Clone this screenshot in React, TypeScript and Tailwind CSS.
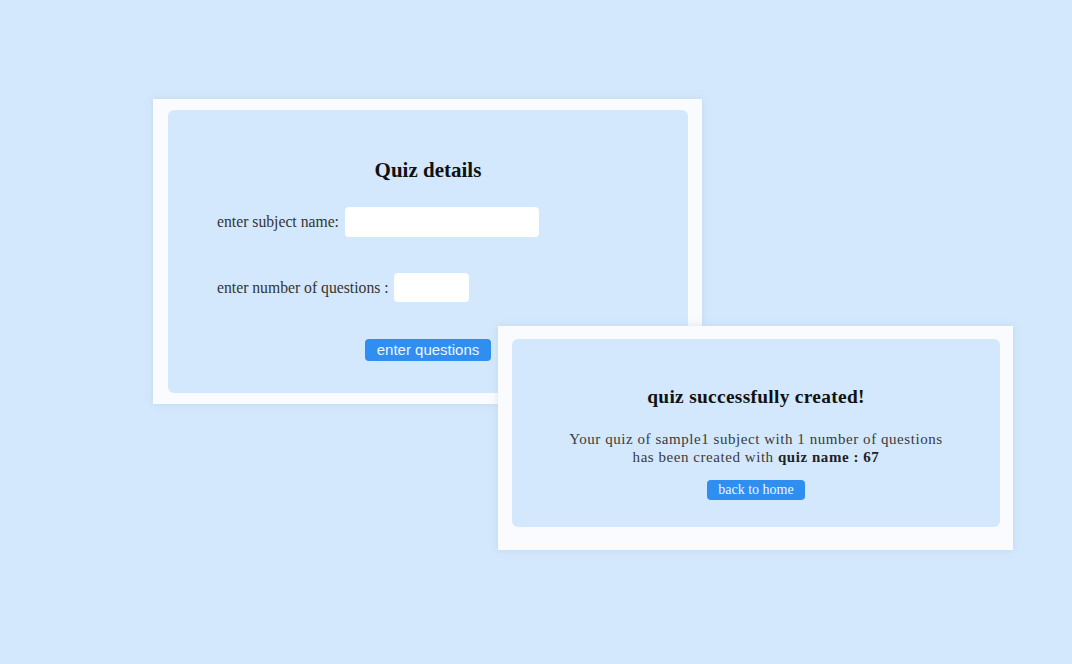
export default function App() {
  return (
    <div className="relative h-[664px] w-[1072px] overflow-hidden bg-[#d3e8fc] font-['Liberation_Serif',serif]">
      {/* quiz details card */}
      <div className="absolute left-[153px] top-[99px] h-[305px] w-[549px] bg-[#f9fbfe] pb-[11px] pl-[15px] pr-[14px] pt-[11px] shadow-[0_0_6px_rgba(180,200,225,0.5)]">
        <div className="flex h-full flex-col rounded-md bg-[#d3e8fc] pt-[48px]">
          <h2 className="text-center text-[21px] font-bold leading-[24px] text-[#111]">
            Quiz details
          </h2>
          <div className="mt-[25px] flex items-center pl-[49px] text-[15.7px] text-[#333]">
            <span>enter subject name:</span>
            <div className="ml-[6px] h-[30px] w-[194px] rounded-sm bg-white"></div>
          </div>
          <div className="mt-[36px] flex items-center pl-[49px] text-[15.7px] text-[#333]">
            <span>enter number of questions :</span>
            <div className="ml-[5px] h-[29px] w-[75px] rounded-sm bg-white"></div>
          </div>
          <div className="mt-[37px] flex justify-center">
            <button className="h-[22px] w-[126px] rounded-sm bg-[#2f8ff0] font-['Liberation_Sans',sans-serif] text-[15px] leading-[22px] text-[#eef5ff]">
              enter questions
            </button>
          </div>
        </div>
      </div>

      {/* success card */}
      <div className="absolute left-[498px] top-[326px] h-[224px] w-[515px] bg-[#f9fbfe] pb-[23px] pl-[14px] pr-[13px] pt-[13px] shadow-[0_0_6px_rgba(180,200,225,0.5)]">
        <div className="flex h-full flex-col items-center rounded-md bg-[#d3e8fc] pt-[47px]">
          <h2 className="text-center text-[19.4px] font-bold leading-[22px] tracking-[0.3px] text-[#111]">
            quiz successfully created!
          </h2>
          <p className="mt-[22px] text-center text-[15px] leading-[18px] tracking-[0.55px] text-[#3a3a3a]">
            Your quiz of sample1 subject with 1 number of questions
            <br />
            has been created with <b className="text-[#222]">quiz name : 67</b>
          </p>
          <button className="mt-[14px] h-[20px] w-[98px] rounded-sm bg-[#2f8ff0] text-[14px] leading-[20px] text-[#eef5ff]">
            back to home
          </button>
        </div>
      </div>
    </div>
  );
}
